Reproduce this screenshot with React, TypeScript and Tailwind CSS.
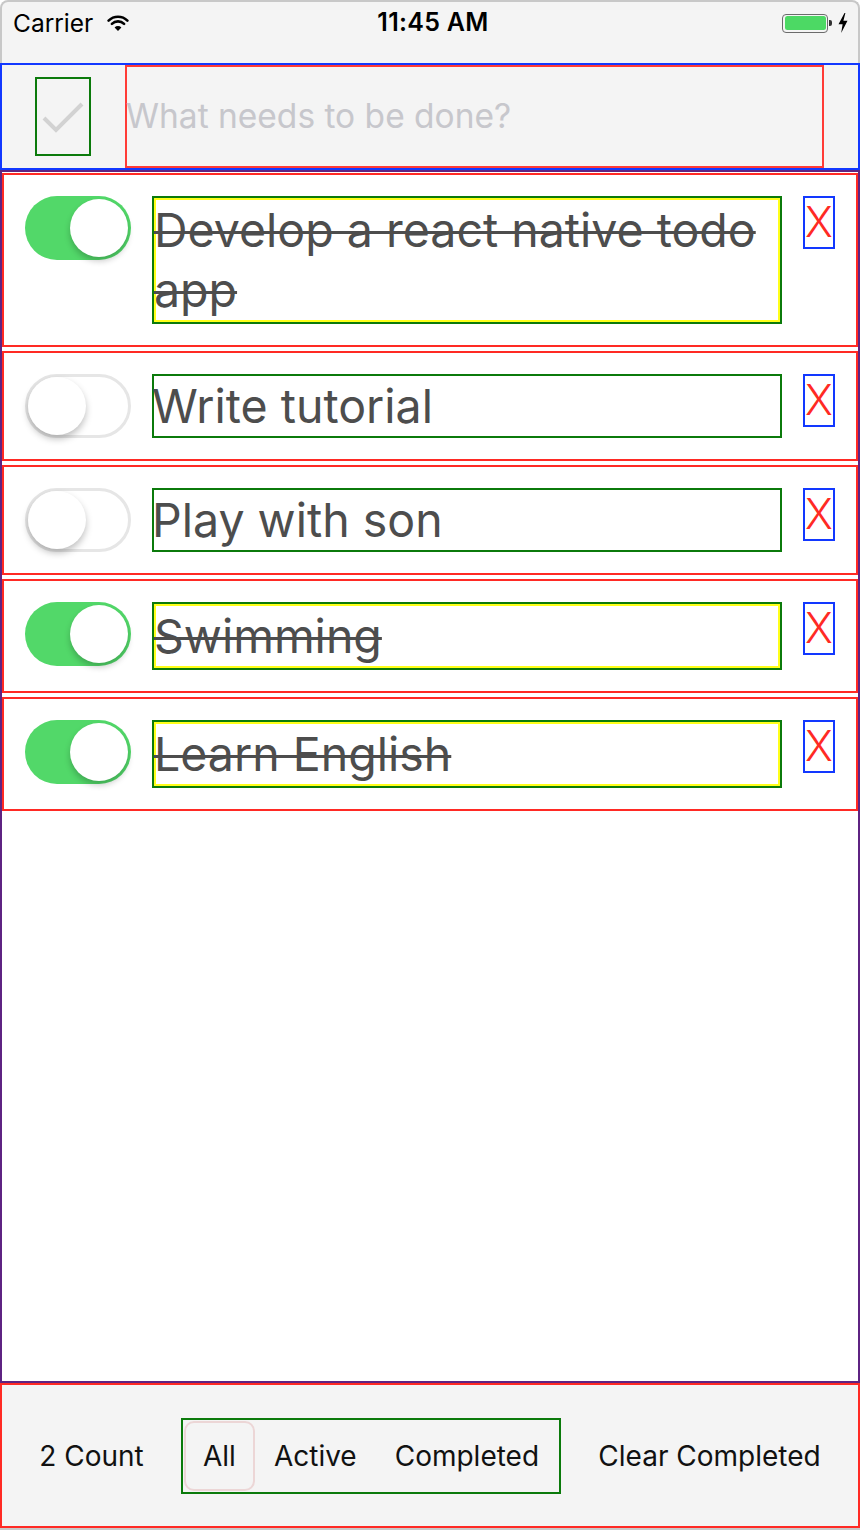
import React from 'react'

type Todo = { id: number; text: string; done: boolean }

const todos: Todo[] = [
  { id: 1, text: 'Develop a react native todo app', done: true },
  { id: 2, text: 'Write tutorial', done: false },
  { id: 3, text: 'Play with son', done: false },
  { id: 4, text: 'Swimming', done: true },
  { id: 5, text: 'Learn English', done: true },
]

function Wifi() {
  return (
    <svg width="22" height="17" viewBox="0 0 22 17" className="ml-[14px]">
      <path d="M1.6 5.6 A13.4 13.4 0 0 1 20.4 5.6" fill="none" stroke="#000" strokeWidth="2.6" strokeLinecap="round" />
      <path d="M4.9 8.9 A8.7 8.7 0 0 1 17.1 8.9" fill="none" stroke="#000" strokeWidth="2.6" strokeLinecap="round" />
      <path d="M11 16 L7.6 12.4 A4.8 4.8 0 0 1 14.4 12.4 Z" fill="#000" />
    </svg>
  )
}

function Battery() {
  return (
    <div className="flex items-center">
      <div className="w-[46px] h-[19px] rounded-[4px] border border-[#6b6b6b] p-[1.5px]">
        <div className="w-full h-full rounded-[2.5px] bg-[#4cd964]" />
      </div>
      <div className="w-[3px] h-[6px] rounded-r-[2px] bg-[#333] ml-[1px]" />
      <svg width="10" height="20" viewBox="0 0 10 20" className="ml-[6px]">
        <path d="M6.5 0 L0.5 11.2 H4.6 L3.2 20 L9.5 7.8 H5.4 L7.4 0 Z" fill="#000" />
      </svg>
    </div>
  )
}

function Switch({ on }: { on: boolean }) {
  if (on) {
    return (
      <div className="relative w-[106px] h-[64px] shrink-0 rounded-full bg-[#52d869]">
        <div className="absolute left-[45px] top-[3px] w-[58px] h-[58px] rounded-full bg-white shadow-[0_4px_6px_rgba(0,0,0,0.22)]" />
      </div>
    )
  }
  return (
    <div className="relative w-[106px] h-[64px] shrink-0 rounded-full bg-white border-[3px] border-[#e6e6e6]">
      <div className="absolute left-[0px] top-[0px] w-[58px] h-[58px] rounded-full bg-white shadow-[0_4px_7px_rgba(0,0,0,0.25)]" />
    </div>
  )
}

function TodoRow({ todo }: { todo: Todo }) {
  const text = (
    <p className={`text-[46.5px] leading-[60px] text-[#4d4d4d] -ml-[2px] ${todo.done ? 'line-through decoration-[3px] decoration-[#4d4d4d]' : ''}`}>
      {todo.text}
    </p>
  )
  return (
    <div className="flex items-start border-2 border-[#ff2a24] bg-white px-[21px] py-[21px]">
      <Switch on={todo.done} />
      <div className="flex-1 ml-[21px] border-2 border-[#0b7a0b]">
        {todo.done ? <div className="border-2 border-[#ffff1a]">{text}</div> : text}
      </div>
      <div className="ml-[21px] w-[32px] h-[53px] shrink-0 border-2 border-[#1238ff] flex justify-center">
        <span className="text-[42px] leading-[48px] font-light text-[#ff2a24]">X</span>
      </div>
    </div>
  )
}

export default function App() {
  return (
    <div className="w-[860px] h-[1530px] flex flex-col bg-white border-b-2 border-[#c8c8c8] font-['Inter','Liberation_Sans',sans-serif]">
      {/* status bar */}
      <div className="h-[63px] shrink-0 bg-[#f4f4f4] border-t-2 border-x-2 border-[#c8c8c8] rounded-t-[8px]">
        <div className="relative h-[42px] flex items-center pl-[11px] pr-[10px]">
          <span className="text-[24.5px] text-black">Carrier</span>
          <Wifi />
          <span className="absolute left-1/2 -translate-x-1/2 ml-[3px] text-[25px] font-semibold tracking-[0.3px] text-black">11:45 AM</span>
          <div className="ml-auto">
            <Battery />
          </div>
        </div>
      </div>

      {/* new todo */}
      <div className="h-[107px] shrink-0 flex items-center border-2 border-[#1238ff] bg-[#f4f4f4]">
        <div className="ml-[33px] w-[56px] h-[79px] border-2 border-[#0b7a0b] flex items-center justify-center">
          <svg width="44" height="34" viewBox="0 0 44 34">
            <path d="M3 18 L15 30 L41 4" fill="none" stroke="#d2d2d2" strokeWidth="4" />
          </svg>
        </div>
        <div className="ml-[34px] w-[699px] h-full border-2 border-[#ff3b36] flex items-center">
          <span className="text-[33.5px] -ml-[1px] text-[#c7c7cc]">What needs to be done?</span>
        </div>
      </div>

      {/* list */}
      <div className="flex-1 flex flex-col gap-[4px] pt-[1px] border-2 border-[#5e2382] bg-white">
        {todos.map((t) => (
          <TodoRow key={t.id} todo={t} />
        ))}
      </div>

      {/* footer */}
      <div className="h-[145px] shrink-0 flex items-center justify-evenly border-2 border-[#ff2a24] bg-[#f4f4f4] text-[28px] text-[#111]">
        <span>2 Count</span>
        <div className="flex border-2 border-[#0b7a0b] p-[1px]">
          <span className="px-[17px] h-[70px] flex items-center rounded-[10px] border-2 border-[#ecd6d6]">All</span>
          <span className="px-[17px] h-[70px] flex items-center border-2 border-transparent">Active</span>
          <span className="px-[17px] h-[70px] flex items-center border-2 border-transparent">Completed</span>
        </div>
        <span>Clear Completed</span>
      </div>
    </div>
  )
}
